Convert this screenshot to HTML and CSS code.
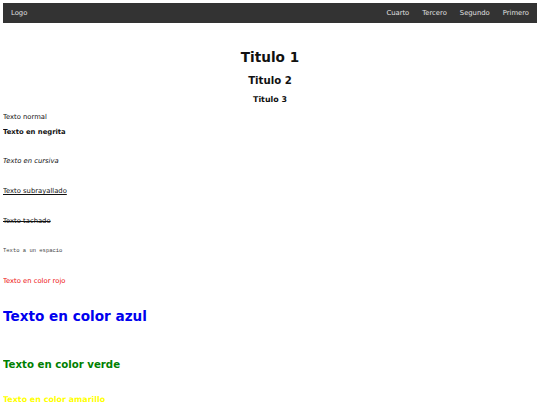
FILE: index.html
```html
<!DOCTYPE html>
<html lang="es">
<head>
<meta charset="utf-8">
<title>Página</title>
<link rel="stylesheet" href="styles.css">
</head>
<body>
<header class="navbar">
  <span class="logo">Logo</span>
  <nav class="menu">
    <a class="menu-item">Cuarto</a>
    <a class="menu-item">Tercero</a>
    <a class="menu-item">Segundo</a>
    <a class="menu-item">Primero</a>
  </nav>
</header>
<main class="content">
  <h1 class="t1">Titulo 1</h1>
  <h2 class="t2">Titulo 2</h2>
  <h3 class="t3">Titulo 3</h3>
  <p class="line normal">Texto normal</p>
  <p class="line bold">Texto en negrita</p>
  <p class="line spaced italic">Texto en cursiva</p>
  <p class="line spaced underline">Texto subrayallado</p>
  <p class="line spaced strike">Texto tachado</p>
  <p class="line spaced mono">Texto a un espacio</p>
  <p class="line spaced red">Texto en color rojo</p>
  <p class="big blue">Texto en color azul</p>
  <p class="medium green">Texto en color verde</p>
  <p class="small yellow">Texto en color amarillo</p>
</main>
</body>
</html>
```

FILE: styles.css
```css
html, body {
  background: #fff;
}
body {
  margin: 3px;
  font-family: "DejaVu Sans", Verdana, sans-serif;
  font-size: 6.8px;
  color: #111;
}
.navbar {
  height: 20px;
  background: #333333;
  display: flex;
  align-items: center;
  justify-content: space-between;
  padding: 0 8px;
  color: #e0e0e0;
}
.menu {
  display: flex;
  gap: 13px;
}
.menu-item {
  color: #e0e0e0;
  text-decoration: none;
}
.content {
  display: block;
}
.t1, .t2, .t3 {
  text-align: center;
  font-weight: bold;
  margin-bottom: 0;
}
.t1 {
  font-size: 13.6px;
  line-height: 16px;
  margin-top: 25.5px;
}
.t2 {
  font-size: 10.2px;
  line-height: 12px;
  margin-top: 10px;
}
.t3 {
  font-size: 7.95px;
  line-height: 9px;
  margin-top: 8.5px;
}
.line {
  line-height: 8px;
  margin: 7px 0 0;
}
.normal {
  margin-top: 8.5px;
}
.spaced {
  margin-top: 21.9px;
}
.bold {
  font-weight: bold;
}
.italic {
  font-style: italic;
}
.underline {
  text-decoration: underline;
}
.strike {
  text-decoration: line-through;
}
.mono {
  font-family: "Liberation Mono", "Courier New", monospace;
  font-size: 5.5px;
  color: #444;
}
.red {
  color: #ee1111;
}
.big, .medium, .small {
  font-weight: bold;
  margin-bottom: 0;
}
.big {
  font-size: 13.6px;
  line-height: 16px;
  margin-top: 23px;
}
.medium {
  font-size: 10.2px;
  line-height: 12px;
  margin-top: 35px;
}
.small {
  font-size: 7.95px;
  line-height: 9px;
  margin-top: 24.5px;
}
.blue {
  color: #0000ee;
}
.green {
  color: #008000;
}
.yellow {
  color: #ffff00;
}
```
